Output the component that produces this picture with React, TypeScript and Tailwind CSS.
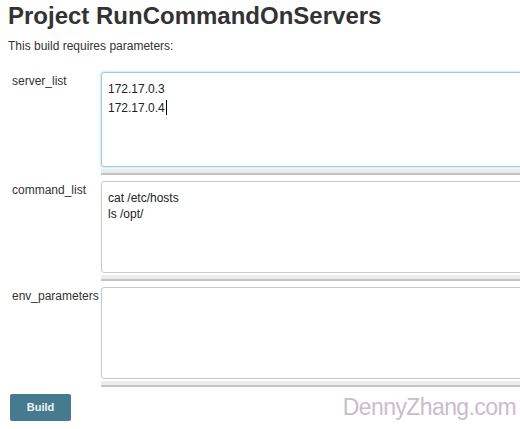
import type { ReactNode } from 'react';

const font = { fontFamily: '"Liberation Sans", Arial, Helvetica, sans-serif' };

function Param({ name, focused, children }: { name: string; focused?: boolean; children?: ReactNode }) {
  return (
    <div className="flex items-start">
      <div className="w-[101px] shrink-0 pl-[12px] pt-[1px] text-[12px] leading-[16px] text-[#333]">{name}</div>
      <div className="w-[440px] shrink-0">
        <div
          className={
            'rounded-[3px] border bg-white pl-[6px] pt-[8px] text-[12px] leading-[16px] text-[#222] whitespace-pre-line ' +
            (focused ? 'h-[95px] border-[#9ecaed] shadow-[0_0_3px_#9ecaed]' : 'h-[92px] border-[#c8c8c8]')
          }
        >
          {children}
        </div>
        <div className="mt-[2px] h-[6px] border-b-2 border-[#c4c4c4] bg-[#ececec]" />
      </div>
    </div>
  );
}

export default function App() {
  return (
    <div className="h-[429px] w-[520px] overflow-hidden bg-white" style={font}>
      <h1 className="pl-[8px] pt-[1px] text-[24px] font-bold leading-[30px] text-[#333]">Project RunCommandOnServers</h1>
      <p className="mt-[7px] pl-[8px] text-[12px] leading-[16px] text-[#333]">This build requires parameters:</p>

      <div className="mt-[18px] flex flex-col gap-[6px]">
        <Param name="server_list" focused>
          {'172.17.0.3\n172.17.0.4'}
          <span className="ml-[1px] inline-block h-[15px] w-px translate-y-[3px] bg-black" />
        </Param>
        <Param name="command_list">{'cat /etc/hosts\nls /opt/'}</Param>
        <Param name="env_parameters" />
      </div>

      <div className="mt-[6px] flex items-end justify-between pl-[10px] pr-[4px]">
        <button className="h-[27px] w-[61px] rounded-[2px] bg-[#467a8f] text-[11px] font-bold text-[#eef3f5]">Build</button>
        <span className="text-[23px] leading-[28px] tracking-[-0.6px] text-[#cbbccb]">DennyZhang.com</span>
      </div>
    </div>
  );
}
